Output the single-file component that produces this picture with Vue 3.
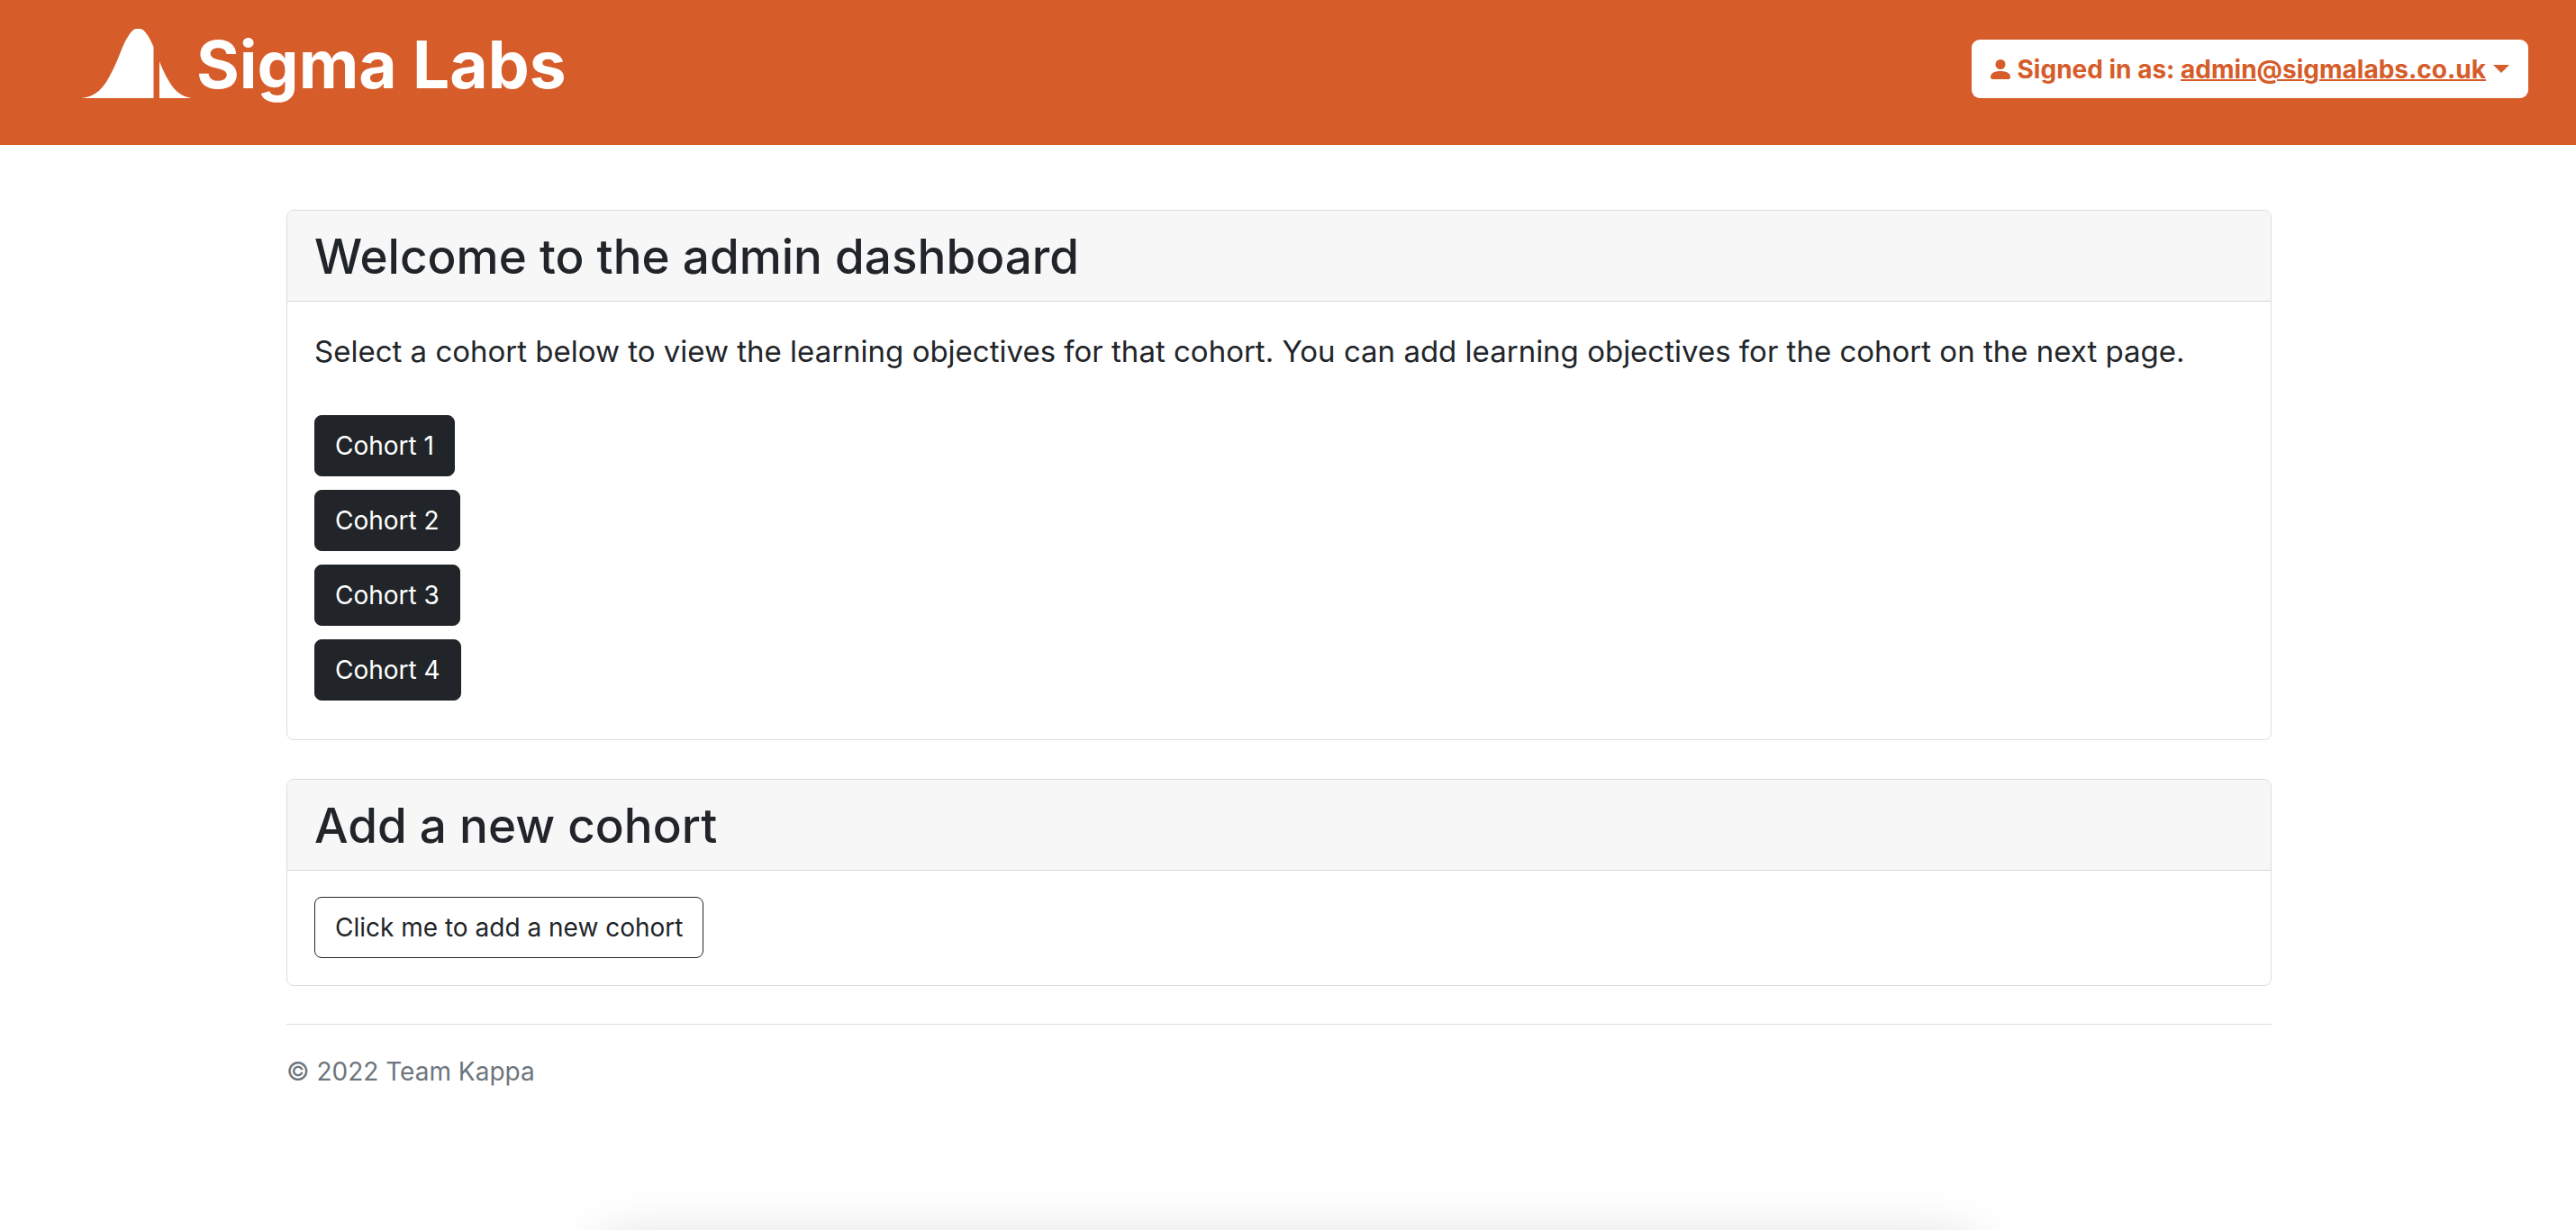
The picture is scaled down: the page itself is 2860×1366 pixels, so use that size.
<script setup>
import { ref } from 'vue'

const email = ref('admin@sigmalabs.co.uk')
const cohorts = ref([1, 2, 3, 4])
</script>

<template>
  <div class="page">
    <header class="topbar">
      <a class="brand" href="#" aria-label="Sigma Labs home">
        <svg class="brand-mark" viewBox="0 0 124 77" aria-hidden="true">
          <path d="M0 77 C14 76 22 68 28 59 C38 43 43 27 48 16 C52 8 57 0 61 0 H66 C70 0 76 9 80.5 20 V77 Z" />
          <path d="M87 36 C91 47 98 60 103 66 C109 73 116 76 123 77 H87 Z" />
        </svg>
        <span class="brand-name">Sigma Labs</span>
      </a>
      <button class="account" type="button" aria-haspopup="true">
        <svg class="person" viewBox="0 0 22 22" aria-hidden="true">
          <ellipse cx="11" cy="5.5" rx="5.5" ry="5.5" />
          <path d="M0 19.5 C0 15 5 13 11 13 S22 15 22 19.5 Q22 22 20 22 H2 Q0 22 0 19.5 Z" />
        </svg>
        <span>Signed in as: <span class="email">{{ email }}</span></span>
        <span class="caret" aria-hidden="true"></span>
      </button>
    </header>

    <div class="container">
      <main class="cards">
        <section class="card">
          <h1 class="card-header">Welcome to the admin dashboard</h1>
          <div class="card-body intro">
            <p class="lead">
              Select a cohort below to view the learning objectives for that cohort. You can add
              learning objectives for the cohort on the next page.
            </p>
            <div class="cohorts">
              <button v-for="n in cohorts" :key="n" class="btn btn-dark" type="button">Cohort {{ n }}</button>
            </div>
          </div>
        </section>

        <section class="card">
          <h2 class="card-header">Add a new cohort</h2>
          <div class="card-body">
            <button class="btn btn-outline" type="button">Click me to add a new cohort</button>
          </div>
        </section>
      </main>

      <footer class="footer">© 2022 Team Kappa</footer>
    </div>
    <div class="bottom-shade"></div>
  </div>
</template>

<style>
body {
  background: #fff;
}
</style>

<style scoped>
.page {
  color: #212529;
  font-family: Inter, "Liberation Sans", sans-serif;
  font-size: 28px;
  line-height: 44px;
}

.topbar {
  display: flex;
  justify-content: space-between;
  align-items: flex-start;
  box-sizing: border-box;
  height: 161px;
  padding: 32px 53px 0 90px;
  background: #d65c29;
}

.brand {
  display: flex;
  gap: 4px;
  color: #fff;
  text-decoration: none;
}

.brand-mark {
  width: 124px;
  height: 77px;
  fill: currentColor;
}

.brand-name {
  font-size: 73px;
  font-weight: 700;
  line-height: 79px;
}

.account {
  display: flex;
  align-items: center;
  gap: 8px;
  height: 65px;
  margin-top: 12px;
  padding: 0 21px;
  border: 0;
  border-radius: 9px;
  background: #fff;
  color: #d65c29;
  font: inherit;
  font-weight: 700;
}

.person {
  width: 22px;
  height: 22px;
  fill: currentColor;
}

.email {
  text-decoration: underline;
  text-decoration-thickness: 2px;
}

.caret {
  border: 9px solid transparent;
  border-top-color: currentColor;
  border-bottom: 0;
}

.container {
  max-width: 2204px;
  margin: 0 auto;
  padding: 72px 20px 0 0;
}

.cards {
  display: flex;
  flex-direction: column;
  gap: 43px;
}

.card {
  border: 1px solid #dcdddd;
  border-radius: 8px;
}

.card-header {
  margin: 0;
  padding: 17px 30px 15px;
  border-bottom: 1px solid #d6d6d6;
  border-radius: 7px 7px 0 0;
  background: #f7f7f7;
  font-size: 53px;
  font-weight: 500;
  line-height: 68px;
}

.card-body {
  padding: 29px 30px 30px;
}

.intro {
  padding-bottom: 43px;
}

.lead {
  margin: 0 0 45px;
  font-size: 33px;
  line-height: 52px;
}

.cohorts {
  display: flex;
  flex-direction: column;
  align-items: flex-start;
  gap: 15px;
}

.btn {
  padding: 11px 22px;
  border: 1px solid #212529;
  border-radius: 8px;
  font: inherit;
}

.btn-dark {
  background: #212529;
  color: #fff;
}

.btn-outline {
  background: transparent;
  color: #212529;
}

.footer {
  margin-top: 42px;
  padding-top: 30px;
  border-top: 1px solid #dee2e6;
  color: #6c757d;
}

.bottom-shade {
  position: fixed;
  top: calc(100% + 10px);
  left: 23%;
  right: 23%;
  height: 100px;
  border-radius: 40px;
  box-shadow: 0 0 60px rgba(0, 0, 0, 0.15);
}
</style>
